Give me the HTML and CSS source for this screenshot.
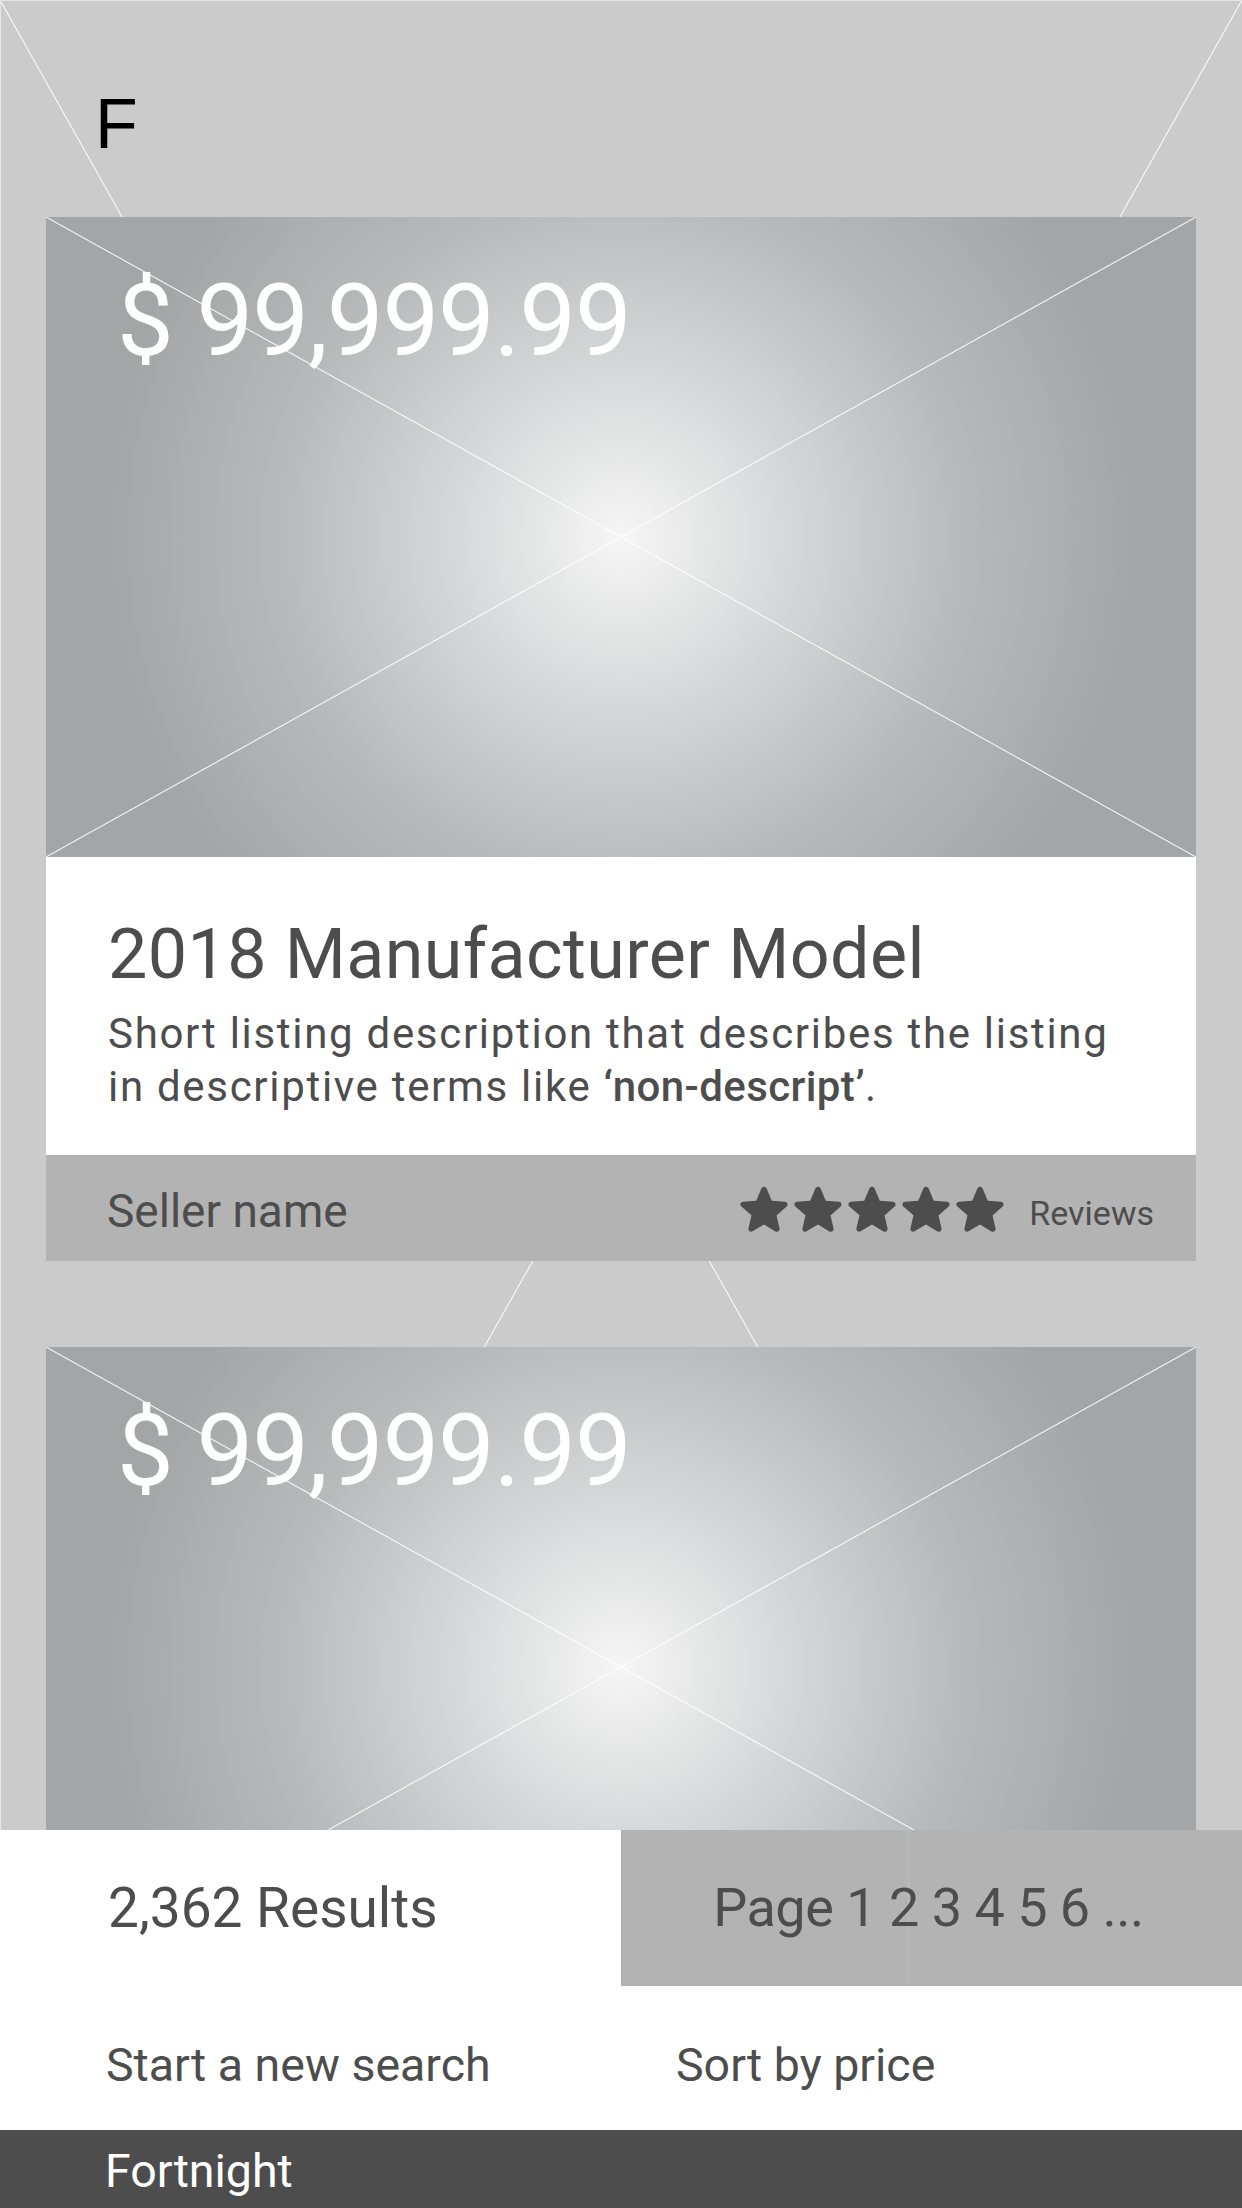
FILE: index.html
```html
<!DOCTYPE html>
<html lang="en">
<head>
<meta charset="utf-8">
<title>Fortnight listings</title>
<link rel="stylesheet" href="styles.css">
</head>
<body>
<div class="page">
  <header class="top-bar"><span class="logo">F</span></header>

  <main class="listings">
    <article class="card">
      <div class="card-media"><span class="price">$ 99,999.99</span></div>
      <div class="card-body">
        <h2 class="card-title">2018 Manufacturer Model</h2>
        <p class="card-desc">Short listing description that describes the listing in descriptive terms like <strong>‘non-descript’</strong>.</p>
      </div>
      <div class="card-footer">
        <span class="seller">Seller name</span>
        <div class="rating">
          <span class="stars">
            <svg class="star" viewBox="3.2 2.6 17.6 17.4"><path d="M12 17.27l4.15 2.51c.76.46 1.69-.22 1.49-1.08l-1.1-4.72 3.67-3.18c.67-.58.31-1.68-.57-1.750l-4.83-.41-1.89-4.46c-.34-.81-1.5-.81-1.84 0L9.19 8.63l-4.83.41c-.88.07-1.24 1.17-.57 1.75l3.67 3.18-1.1 4.72c-.2.86.73 1.54 1.49 1.08l4.15-2.5z"/></svg>
            <svg class="star" viewBox="3.2 2.6 17.6 17.4"><path d="M12 17.27l4.15 2.51c.76.46 1.69-.22 1.49-1.08l-1.1-4.72 3.67-3.18c.67-.58.31-1.68-.57-1.750l-4.83-.41-1.89-4.46c-.34-.81-1.5-.81-1.84 0L9.19 8.63l-4.83.41c-.88.07-1.24 1.17-.57 1.75l3.67 3.18-1.1 4.72c-.2.86.73 1.54 1.49 1.08l4.15-2.5z"/></svg>
            <svg class="star" viewBox="3.2 2.6 17.6 17.4"><path d="M12 17.27l4.15 2.51c.76.46 1.69-.22 1.49-1.08l-1.1-4.72 3.67-3.18c.67-.58.31-1.68-.57-1.750l-4.83-.41-1.89-4.46c-.34-.81-1.5-.81-1.84 0L9.19 8.63l-4.83.41c-.88.07-1.24 1.17-.57 1.75l3.67 3.18-1.1 4.72c-.2.86.73 1.54 1.49 1.08l4.15-2.5z"/></svg>
            <svg class="star" viewBox="3.2 2.6 17.6 17.4"><path d="M12 17.27l4.15 2.51c.76.46 1.69-.22 1.49-1.08l-1.1-4.72 3.67-3.18c.67-.58.31-1.68-.57-1.750l-4.83-.41-1.89-4.46c-.34-.81-1.5-.81-1.84 0L9.19 8.63l-4.83.41c-.88.07-1.24 1.17-.57 1.75l3.67 3.18-1.1 4.72c-.2.86.73 1.54 1.49 1.08l4.15-2.5z"/></svg>
            <svg class="star" viewBox="3.2 2.6 17.6 17.4"><path d="M12 17.27l4.15 2.51c.76.46 1.69-.22 1.49-1.08l-1.1-4.72 3.67-3.18c.67-.58.31-1.68-.57-1.750l-4.83-.41-1.89-4.46c-.34-.81-1.5-.81-1.84 0L9.19 8.63l-4.83.41c-.88.07-1.24 1.17-.57 1.75l3.67 3.18-1.1 4.72c-.2.86.73 1.54 1.49 1.08l4.15-2.5z"/></svg>
          </span>
          <span class="reviews">Reviews</span>
        </div>
      </div>
    </article>

    <article class="card">
      <div class="card-media"><span class="price">$ 99,999.99</span></div>
    </article>
  </main>

  <section class="bottom-panel">
    <div class="results-row">
      <div class="results-count">2,362 Results</div>
      <div class="pagination">Page 1 2 3 4 5 6 ...</div>
    </div>
    <div class="actions-row">
      <span class="action">Start a new search</span>
      <span class="action action-right">Sort by price</span>
    </div>
    <footer class="brand-bar">Fortnight</footer>
  </section>
</div>
</body>
</html>
```

FILE: styles.css
```css
* { box-sizing: border-box; }

html, body {
  margin: 0;
  padding: 0;
}

body {
  font-family: Roboto, "Liberation Sans", Arial, sans-serif;
  color: #4d4d4d;
}

.page {
  position: relative;
  width: 1242px;
  height: 2208px;
  overflow: hidden;
  background:
    linear-gradient(to top right, transparent calc(50% - 1px), rgba(255,255,255,0.95) 50%, transparent calc(50% + 1px)),
    linear-gradient(to top left, transparent calc(50% - 1px), rgba(255,255,255,0.95) 50%, transparent calc(50% + 1px)),
    #cbcbcb;
  box-shadow: inset 1px 1px 0 #e4e4e4;
}

.top-bar {
  height: 217px;
  padding: 89px 0 0 95px;
}

.logo {
  display: block;
  font-family: "Liberation Sans", Arial, sans-serif;
  font-size: 70px;
  line-height: 1;
  color: #000;
}

.listings {
  display: flex;
  flex-direction: column;
  gap: 86px;
  padding: 0 46px;
}

.card-media {
  height: 640px;
  padding: 53px 0 0 71px;
  background:
    linear-gradient(to top right, transparent calc(50% - 1px), rgba(255,255,255,0.95) 50%, transparent calc(50% + 1px)),
    linear-gradient(to top left, transparent calc(50% - 1px), rgba(255,255,255,0.95) 50%, transparent calc(50% + 1px)),
    radial-gradient(circle 520px at 50% 50%, #f6f6f6 0%, #d6d7d8 33%, #b8b9bb 66%, #a4a5a7 100%);
}

.price {
  display: block;
  font-size: 101px;
  line-height: 1;
  letter-spacing: -1.1px;
  color: #fff;
}

.card-body {
  height: 298px;
  background: #fff;
  padding: 62px 40px 0 62px;
}

.card-title {
  margin: 0;
  font-size: 70px;
  line-height: 1;
  font-weight: 400;
  letter-spacing: 0.4px;
  color: #4d4d4d;
}

.card-desc {
  margin: 18px 0 0;
  font-size: 42px;
  line-height: 53px;
  letter-spacing: 1.7px;
}

.card-desc strong {
  font-weight: 500;
  letter-spacing: 0.4px;
}

.card-footer {
  height: 106px;
  background: #b3b3b3;
  display: flex;
  align-items: center;
  justify-content: space-between;
  padding: 6px 42px 0 61px;
}

.seller {
  font-size: 46px;
  line-height: 1;
}

.rating {
  display: flex;
  align-items: center;
  gap: 24px;
}

.stars {
  display: flex;
  gap: 4px;
  margin-top: -6px;
}

.star {
  display: block;
  width: 50px;
  height: 48px;
  fill: #4d4d4d;
}

.reviews {
  font-size: 34px;
  line-height: 1;
  margin-top: 4px;
}

.bottom-panel {
  position: absolute;
  left: 0;
  right: 0;
  bottom: 0;
  height: 378px;
  background: #fff;
  display: flex;
  flex-direction: column;
}

.results-row {
  height: 156px;
  display: grid;
  grid-template-columns: 621px 1fr;
}

.results-count {
  display: flex;
  align-items: center;
  padding: 0 0 0 108px;
  font-size: 55px;
  line-height: 1;
}

.pagination {
  display: flex;
  align-items: center;
  justify-content: center;
  padding-right: 6px;
  font-size: 54px;
  line-height: 1;
  letter-spacing: -0.5px;
  background:
    linear-gradient(to right, transparent 287px, #bcbcbc 287px, #bcbcbc 288px, transparent 288px),
    #b3b3b3;
}

.actions-row {
  height: 144px;
  display: grid;
  grid-template-columns: 621px 1fr;
  padding-top: 56px;
}

.action {
  font-size: 46.5px;
  line-height: 1;
  padding-left: 106px;
}

.action-right {
  padding-left: 55px;
}

.brand-bar {
  height: 78px;
  background: #4d4d4d;
  color: #fff;
  font-size: 46.5px;
  line-height: 1;
  padding: 18px 0 0 105px;
}
```
